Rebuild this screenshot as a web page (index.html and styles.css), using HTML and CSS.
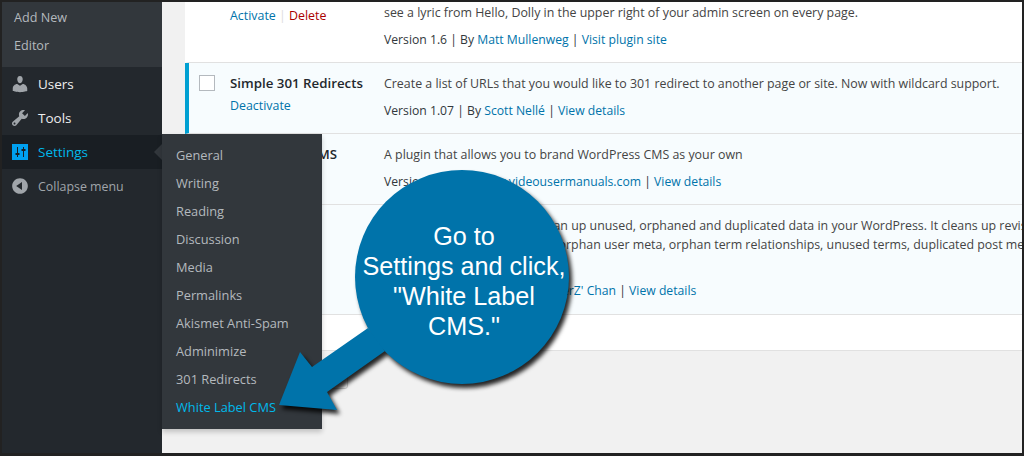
FILE: index.html

```html
<!DOCTYPE html>
<html lang="en">
<head>
  <meta charset="UTF-8" />
  <meta name="viewport" content="width=device-width, initial-scale=1.0"/>
  <title>Plugins</title>
  <link rel="stylesheet" href="styles.css">
</head>
<body>
  <div class="frame">

    <div class="sidebar">
      <ul class="submenu">
        <li>Add New</li>
        <li>Editor</li>
      </ul>
      <div class="menu-item">
        <svg class="menu-icon" viewBox="0 0 20 20"><path d="M10 9.25c-2.27 0-2.73-3.44-2.73-3.44C7 4.02 7.82 2 9.97 2c2.16 0 2.98 2.02 2.71 3.81 0 0-.41 3.44-2.68 3.44zm0 2.57L12.72 10c2.39 0 4.52 2.33 4.52 4.53v2.49s-3.65 1.13-7.24 1.13c-3.65 0-7.24-1.13-7.24-1.13v-2.49c0-2.25 1.94-4.48 4.47-4.48z"/></svg>
        <span>Users</span>
      </div>
      <div class="menu-item">
        <svg class="menu-icon" viewBox="0 0 20 20"><path d="M16.68 9.77c-1.34 1.34-3.3 1.67-4.95.99l-5.41 6.52c-.99.99-2.59.99-3.58 0s-.99-2.59 0-3.57l6.52-5.42c-.68-1.65-.35-3.61.99-4.95 1.28-1.28 3.12-1.62 4.72-1.06l-2.89 2.89 2.82 2.82 2.86-2.87c.53 1.58.18 3.39-1.08 4.65zM3.81 16.21c.4.39 1.04.39 1.43 0 .4-.4.4-1.04 0-1.43-.39-.4-1.03-.4-1.43 0-.39.39-.39 1.03 0 1.43z"/></svg>
        <span>Tools</span>
      </div>
      <div class="menu-item current">
        <svg class="menu-icon" viewBox="0 0 20 20"><path d="M18 18V2H2v16h16zM8 11h1.500v2H8v2H7v-2H5.500v-2H7V5h1v6zm5-2h-1.500V7H13V5h1v2h1.500v2H14v6h-1V9z"/></svg>
        <span>Settings</span>
        <div class="flyout-arrow"></div>
        <ul class="flyout">
          <li>General</li>
          <li>Writing</li>
          <li>Reading</li>
          <li>Discussion</li>
          <li>Media</li>
          <li>Permalinks</li>
          <li>Akismet Anti-Spam</li>
          <li>Adminimize</li>
          <li>301 Redirects</li>
          <li class="active">White Label CMS</li>
        </ul>
      </div>
      <div class="menu-item collapse">
        <svg class="menu-icon" viewBox="0 0 20 20"><path d="M10 2.160c4.330 0 7.840 3.510 7.840 7.840s-3.510 7.840-7.840 7.840S2.160 14.330 2.160 10 5.710 2.160 10 2.160zm2 11.720V6.120L6.180 9.970z"/></svg>
        <span>Collapse menu</span>
      </div>
    </div>

    <div class="main">
      <div class="plugin-row first">
        <div></div>
        <div class="plugin-name">
          <div class="actions"><a>Activate</a> <span class="sep">|</span> <a class="delete">Delete</a></div>
        </div>
        <div class="plugin-desc">
          <p>see a lyric from Hello, Dolly in the upper right of your admin screen on every page.</p>
          <p class="meta">Version 1.6 | By <a>Matt Mullenweg</a> | <a>Visit plugin site</a></p>
        </div>
      </div>

      <div class="plugin-row active">
        <div><span class="check"></span></div>
        <div class="plugin-name">
          <strong>Simple 301 Redirects</strong>
          <div class="actions"><a>Deactivate</a></div>
        </div>
        <div class="plugin-desc">
          <p>Create a list of URLs that you would like to 301 redirect to another page or site. Now with wildcard support.</p>
          <p class="meta">Version 1.07 | By <a>Scott Nellé</a> | <a>View details</a></p>
        </div>
      </div>

      <div class="plugin-row active">
        <div><span class="check"></span></div>
        <div class="plugin-name">
          <strong>White Label CMS</strong>
        </div>
        <div class="plugin-desc">
          <p>A plugin that allows you to brand WordPress CMS as your own</p>
          <p class="meta">Version 1.6 | By <a>www.videousermanuals.com</a> | <a>View details</a></p>
        </div>
      </div>

      <div class="plugin-row active tall">
        <div></div>
        <div></div>
        <div class="plugin-desc">
          <p>This plugin enables you to clean up unused, orphaned and duplicated data in your WordPress. It cleans up revisions, auto drafts</p>
          <p>comments, orphan postmeta, orphan user meta, orphan term relationships, unused terms, duplicated post meta, duplicated</p>
          <p class="meta spaced">Version 1.0.10 | By <a>Lester 'GaMerZ' Chan</a> | <a>View details</a></p>
        </div>
      </div>

      <div class="plugin-foot"></div>

      <div class="tablenav">
        <span class="bulk-select"></span>
        <span class="apply"></span>
      </div>
    </div>

    <div class="callout">
      <svg class="callout-shape" viewBox="0 0 320 260">
        <circle cx="202" cy="107" r="107"/>
        <polygon points="108,158 52,197 40,182 19,235 77,240 67,222 125,181"/>
      </svg>
      <div class="callout-text">Go to<br>Settings and click,<br>"White Label<br>CMS."</div>
    </div>

  </div>
</body>
</html>
```

FILE: styles.css

```css
html, body {
  margin: 0;
  height: 100%;
  overflow: hidden;
}
body {
  font-family: "Open Sans", sans-serif;
  font-size: 12.4px;
  line-height: 19px;
  color: #444;
  background-color: #f1f1f1;
}
ul {
  list-style: none;
  margin: 0;
  padding: 0;
}
a {
  color: #0073aa;
}

.frame {
  position: relative;
  box-sizing: border-box;
  display: flex;
  width: 1024px;
  height: 456px;
  border: 2px solid #222;
  border-bottom-width: 3px;
  background-color: #f1f1f1;
}

/* Sidebar */
.sidebar {
  flex: none;
  width: 160px;
  background-color: #23282d;
  color: #eee;
}
.submenu {
  padding: 2px 0 7px;
  background-color: #32373c;
  color: #b4b9be;
  font-size: 12.6px;
}
.submenu li {
  height: 28px;
  line-height: 28px;
  padding-left: 12px;
}
.menu-item {
  position: relative;
  display: flex;
  align-items: center;
  gap: 8px;
  height: 34px;
  padding-left: 8px;
  font-size: 13.500px;
}
.menu-icon {
  width: 20px;
  height: 20px;
  fill: #a0a5aa;
}
.menu-item.current {
  background-color: #191e23;
  color: #00b9eb;
}
.menu-item.current .menu-icon {
  fill: #00a0f0;
}
.menu-item.collapse {
  font-size: 12.4px;
  color: #a0a5aa;
}
.flyout-arrow {
  position: absolute;
  left: 152px;
  top: 9px;
  border: 8px solid transparent;
  border-left: 0;
  border-right-color: #32373c;
}
.flyout {
  position: absolute;
  z-index: 2;
  left: 160px;
  top: -1px;
  width: 160px;
  padding: 7px 0 8px;
  background-color: #32373c;
  color: #b4b9be;
  font-size: 12.800px;
  box-shadow: 0 3px 5px rgba(0, 0, 0, 0.2);
}
.flyout li {
  height: 28px;
  line-height: 28px;
  padding-left: 14px;
}
.flyout li.active {
  color: #00b9eb;
}

/* Plugin table */
.main {
  flex: 1;
  min-width: 0;
  margin-left: 23px;
}
.plugin-row {
  display: grid;
  grid-template-columns: 41px 154px 1fr;
  box-sizing: border-box;
  border-left: 4px solid transparent;
  border-bottom: 1px solid #e1e1e1;
  background-color: #fff;
  padding: 11px 0 13px;
  overflow: hidden;
}
.plugin-row.first {
  padding-top: 1px;
  height: 61px;
}
.plugin-row.first .actions {
  margin-top: 3px;
}
.plugin-row.active {
  background-color: #f7fcfe;
  border-left-color: #00a0d2;
}
.plugin-row.tall {
  padding-bottom: 14px;
}
.check {
  display: block;
  box-sizing: border-box;
  width: 16px;
  height: 16px;
  margin: 1px 0 0 10px;
  border: 1px solid #b4b9be;
  background-color: #fff;
}
.plugin-name strong {
  display: block;
  font-size: 13.300px;
  font-weight: 600;
  color: #23282d;
}
.actions {
  margin-top: 3px;
}
.delete {
  color: #a00;
}
.sep {
  color: #ddd;
}
.plugin-desc p {
  margin: 0;
  white-space: nowrap;
}
.plugin-desc .meta {
  margin-top: 8px;
  font-size: 12.2px;
  color: #32373c;
}
.plugin-desc .meta.spaced {
  margin-top: 27px;
}
.plugin-foot {
  box-sizing: border-box;
  height: 36px;
  background-color: #fff;
  border-bottom: 1px solid #e1e1e1;
}
.tablenav {
  display: flex;
  gap: 8px;
  margin-top: 10px;
}
.bulk-select, .apply {
  box-sizing: border-box;
  height: 28px;
  border: 1px solid #ccc;
  border-radius: 3px;
  background-color: #f7f7f7;
}
.bulk-select {
  width: 105px;
}
.apply {
  width: 50px;
}

/* Callout over the page */
.callout {
  position: absolute;
  z-index: 3;
  left: 258px;
  top: 168px;
  width: 320px;
  height: 260px;
}
.callout-shape {
  display: block;
  width: 320px;
  height: 260px;
  overflow: visible;
  fill: #0073aa;
  filter: drop-shadow(3px 4px 2px rgba(0, 0, 0, 0.85));
}
.callout-text {
  position: absolute;
  left: 97px;
  top: 51px;
  width: 214px;
  text-align: center;
  font-family: "Liberation Sans", sans-serif;
  font-size: 25.2px;
  line-height: 30px;
  color: #fff;
}
```
